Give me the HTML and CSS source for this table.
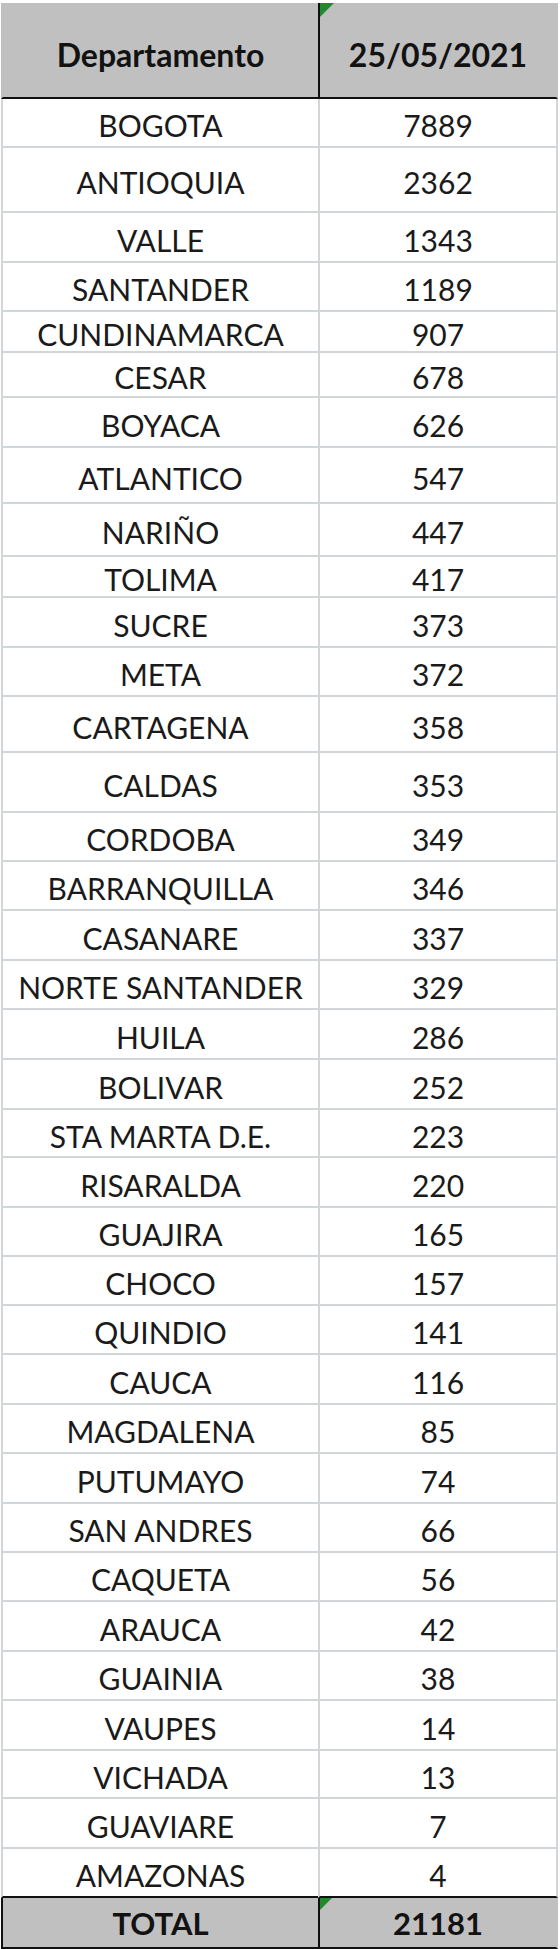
FILE: index.html
```html
<!DOCTYPE html>
<html lang="es">
<head>
<meta charset="utf-8">
<title>Departamento 25/05/2021</title>
<link rel="stylesheet" href="styles.css">
</head>
<body>
<div class="sheet">
  <div class="cell head">Departamento</div>
  <div class="cell head val"><span class="flag"></span>25/05/2021</div>

  <div class="cell">BOGOTA</div><div class="cell val">7889</div>
  <div class="cell">ANTIOQUIA</div><div class="cell val">2362</div>
  <div class="cell">VALLE</div><div class="cell val">1343</div>
  <div class="cell">SANTANDER</div><div class="cell val">1189</div>
  <div class="cell">CUNDINAMARCA</div><div class="cell val">907</div>
  <div class="cell">CESAR</div><div class="cell val">678</div>
  <div class="cell">BOYACA</div><div class="cell val">626</div>
  <div class="cell">ATLANTICO</div><div class="cell val">547</div>
  <div class="cell">NARIÑO</div><div class="cell val">447</div>
  <div class="cell">TOLIMA</div><div class="cell val">417</div>
  <div class="cell">SUCRE</div><div class="cell val">373</div>
  <div class="cell">META</div><div class="cell val">372</div>
  <div class="cell">CARTAGENA</div><div class="cell val">358</div>
  <div class="cell">CALDAS</div><div class="cell val">353</div>
  <div class="cell">CORDOBA</div><div class="cell val">349</div>
  <div class="cell">BARRANQUILLA</div><div class="cell val">346</div>
  <div class="cell">CASANARE</div><div class="cell val">337</div>
  <div class="cell">NORTE SANTANDER</div><div class="cell val">329</div>
  <div class="cell">HUILA</div><div class="cell val">286</div>
  <div class="cell">BOLIVAR</div><div class="cell val">252</div>
  <div class="cell">STA MARTA D.E.</div><div class="cell val">223</div>
  <div class="cell">RISARALDA</div><div class="cell val">220</div>
  <div class="cell">GUAJIRA</div><div class="cell val">165</div>
  <div class="cell">CHOCO</div><div class="cell val">157</div>
  <div class="cell">QUINDIO</div><div class="cell val">141</div>
  <div class="cell">CAUCA</div><div class="cell val">116</div>
  <div class="cell">MAGDALENA</div><div class="cell val">85</div>
  <div class="cell">PUTUMAYO</div><div class="cell val">74</div>
  <div class="cell">SAN ANDRES</div><div class="cell val">66</div>
  <div class="cell">CAQUETA</div><div class="cell val">56</div>
  <div class="cell">ARAUCA</div><div class="cell val">42</div>
  <div class="cell">GUAINIA</div><div class="cell val">38</div>
  <div class="cell">VAUPES</div><div class="cell val">14</div>
  <div class="cell">VICHADA</div><div class="cell val">13</div>
  <div class="cell">GUAVIARE</div><div class="cell val">7</div>
  <div class="cell last">AMAZONAS</div><div class="cell val last">4</div>

  <div class="cell total">TOTAL</div>
  <div class="cell total val"><span class="flag small"></span>21181</div>
</div>
</body>
</html>
```

FILE: styles.css
```css
html, body {
  margin: 0;
  padding: 0;
  background: #ffffff;
}

body {
  font-family: Lato, "Open Sans", "Liberation Sans", sans-serif;
  color: #1a1a1a;
}

.sheet {
  display: grid;
  grid-template-columns: 317px 240px;
  grid-template-rows:
    96px
    49px 65px 50px 49px 41px 45px 50px 56px 53px 41px
    50px 49px 56px 60px 49px 49px 50px 49px 50px 50px
    48px 50px 49px 49px 49px 50px 49px 50px 49px 49px
    50px 49px 50px 48px 50px 49px
    51px;
  margin: 3px 0 0 1px;
}

.cell {
  position: relative;
  display: flex;
  align-items: center;
  justify-content: center;
  padding-top: 5px;
  box-sizing: border-box;
  border-left: 2px solid #d3d6d9;
  border-bottom: 2px solid #d3d6d9;
  font-size: 30px;
  line-height: 1;
  white-space: nowrap;
}

.val {
  border-right: 2px solid #d3d6d9;
}

.head {
  background: #c0c0c0;
  border-left-color: #c0c0c0;
  border-bottom-color: #111111;
  font-weight: 700;
  font-size: 32px;
  color: #121212;
  padding-top: 9px;
}

.head.val {
  border-left-color: #111111;
  border-right-color: #c0c0c0;
}

.last {
  border-bottom-color: #111111;
}

.total {
  background: #c0c0c0;
  font-weight: 700;
  font-size: 31px;
  color: #121212;
  border-left-color: #111111;
  border-bottom-color: #111111;
  padding-top: 2px;
}

.total.val {
  border-right-color: #c0c0c0;
}

.flag {
  position: absolute;
  left: 0;
  top: 0;
  width: 0;
  height: 0;
  border-top: 14px solid #1f8a2e;
  border-right: 14px solid transparent;
}

.flag.small {
  border-top-width: 12px;
  border-right-width: 12px;
}
```
